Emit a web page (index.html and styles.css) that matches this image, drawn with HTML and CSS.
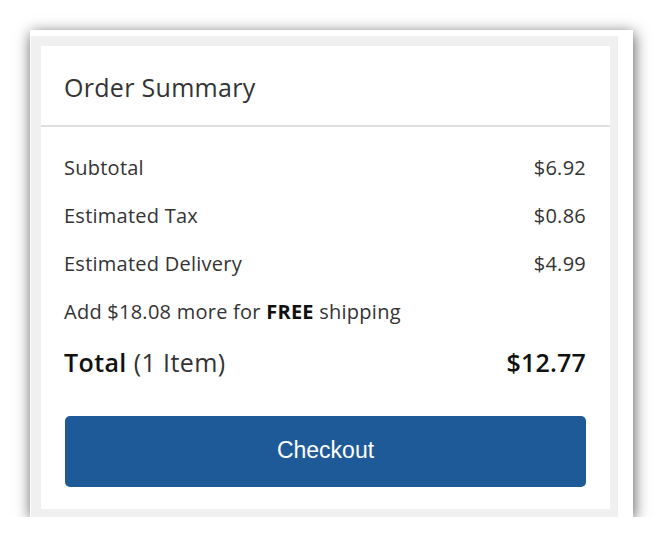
FILE: index.html
```html
<!DOCTYPE html>
<html>
<head>
<meta charset="utf-8">
<link rel="stylesheet" href="styles.css">
</head>
<body>
<div class="frame">
  <div class="well">
    <div class="card">
      <div class="card-header">Order Summary</div>
      <div class="card-body">
        <div class="row"><span>Subtotal</span><span>$6.92</span></div>
        <div class="row"><span>Estimated Tax</span><span>$0.86</span></div>
        <div class="row"><span>Estimated Delivery</span><span>$4.99</span></div>
        <div class="row"><span>Add $18.08 more for <b>FREE</b> shipping</span></div>
        <div class="row total"><span><b>Total</b> (1 Item)</span><span class="amount">$12.77</span></div>
        <button class="checkout">Checkout</button>
      </div>
    </div>
  </div>
</div>
</body>
</html>
```
FILE: styles.css
```css
html, body {
  margin: 0;
  padding: 0;
  background: #ffffff;
}
body {
  font-family: "Open Sans", "Noto Sans", sans-serif;
  color: #333333;
}
.frame {
  margin: 30px 0 0 30px;
  width: 587px;
  height: 481px;
  padding: 6px 15px 0 1px;
  background: #ffffff;
  box-shadow: 1px 3px 14px rgba(0, 0, 0, 0.65);
}
.well {
  background: #f0f0f0;
  padding: 10px 8px 8px 10px;
  height: 463px;
}
.card {
  background: #ffffff;
  height: 463px;
  display: flex;
  flex-direction: column;
}
.card-header {
  box-sizing: border-box;
  height: 81px;
  padding-top: 2px;
  display: flex;
  align-items: center;
  padding-left: 23px;
  font-size: 25px;
  color: #333333;
  border-bottom: 2px solid #e0e0e0;
  letter-spacing: 0.3px;
}
.card-body {
  padding: 16px 24px 0 23px;
  display: flex;
  flex-direction: column;
}
.row {
  height: 48px;
  display: flex;
  justify-content: space-between;
  align-items: center;
  font-size: 20px;
  letter-spacing: 0.25px;
}
.row b {
  font-weight: 700;
  color: #111;
}
.row.total {
  height: 54px;
  font-size: 25px;
  letter-spacing: 0.4px;
}
.row.total b {
  font-weight: 600;
}
.row.total .amount {
  font-weight: 600;
  color: #111;
  letter-spacing: 0.2px;
}
.checkout {
  margin-top: 27px;
  margin-left: 1px;
  height: 71px;
  padding-bottom: 3px;
  border: none;
  border-radius: 5px;
  background: #1f5a98;
  color: #ffffff;
  font-family: "Liberation Sans", Arial, sans-serif;
  font-size: 23px;
}
```
